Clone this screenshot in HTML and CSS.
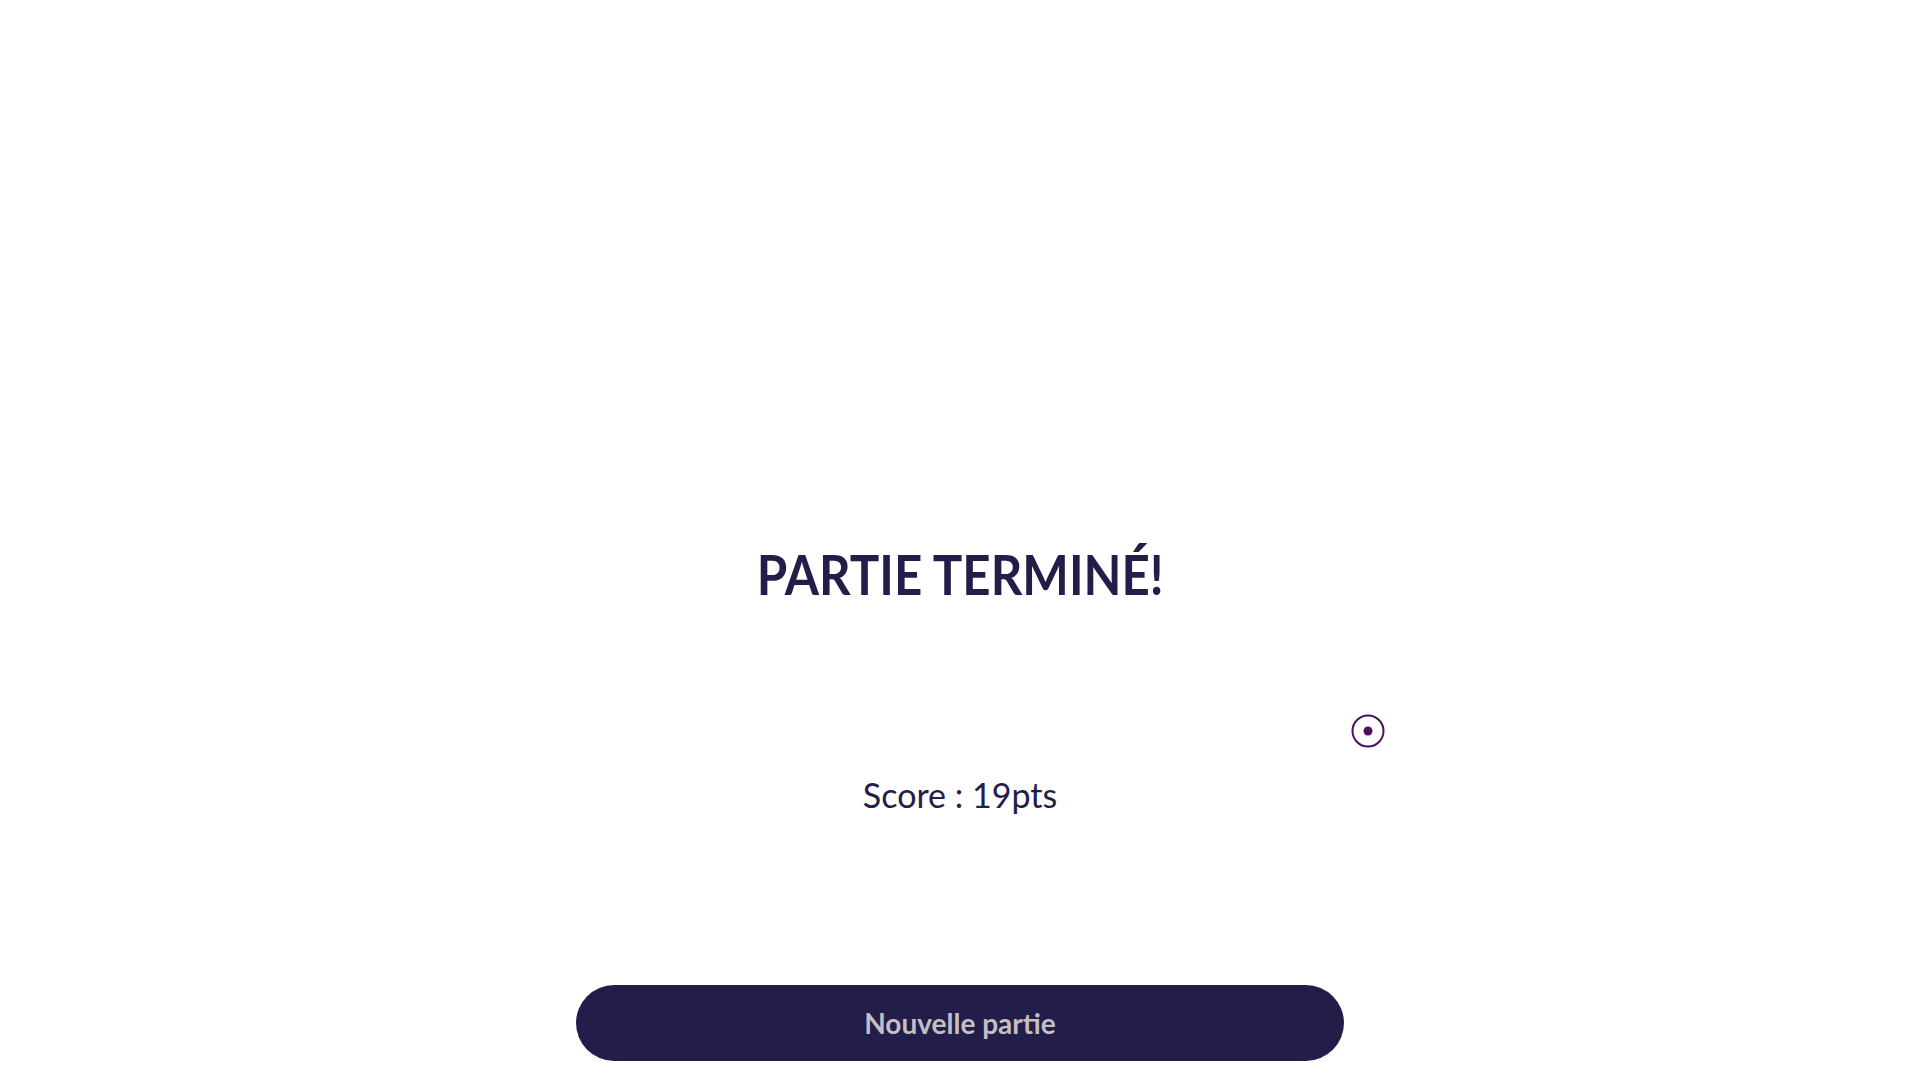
FILE: index.html
```html
<!DOCTYPE html>
<html lang="fr">
<head>
<meta charset="utf-8">
<title>Partie terminée</title>
<link rel="stylesheet" href="styles.css">
</head>
<body>
<main class="screen">
  <h1 class="title">PARTIE TERMINÉ!</h1>
  <p class="score">Score : 19pts</p>
  <button class="new-game" type="button">Nouvelle partie</button>
</main>
<svg class="target" width="34" height="34" viewBox="0 0 34 34" aria-hidden="true">
  <circle cx="17" cy="17" r="15.5" fill="none" stroke="#4b0f5e" stroke-width="2"/>
  <circle cx="17" cy="17" r="4.5" fill="#4b0f5e"/>
</svg>
</body>
</html>
```

FILE: styles.css
```css
* { box-sizing: border-box; }
html, body {
  margin: 0;
  padding: 0;
  background: #ffffff;
  height: 100%;
}
body {
  font-family: Lato, "Noto Sans", sans-serif;
  color: #231d4a;
  position: relative;
  overflow: hidden;
}
.screen {
  width: 768px;
  margin: 0 auto;
  padding-top: 540px;
  display: flex;
  flex-direction: column;
  align-items: center;
}
.title {
  margin: 0;
  font-size: 56px;
  line-height: 67px;
  font-weight: 700;
  color: #241d4a;
  letter-spacing: 0;
  transform: scaleX(0.88);
}
.score {
  margin: 167px 0 0;
  font-size: 34px;
  line-height: 41px;
  font-weight: 400;
  color: #231d4a;
}
.new-game {
  margin-top: 170px;
  width: 768px;
  height: 76px;
  border: none;
  border-radius: 38px;
  background: #231d4a;
  color: #c3bfc2;
  font-family: Lato, "Noto Sans", sans-serif;
  font-weight: 700;
  font-size: 28px;
  cursor: pointer;
}
.target {
  position: absolute;
  left: 1351px;
  top: 714px;
}
```
